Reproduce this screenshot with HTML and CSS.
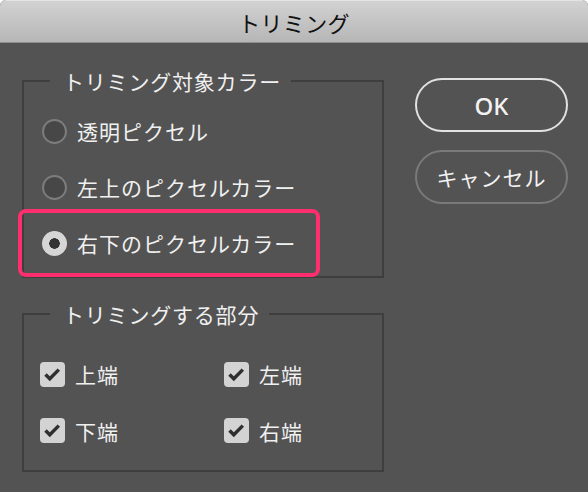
FILE: index.html
```html
<!DOCTYPE html>
<html lang="ja">
<head>
    <meta charset="UTF-8">
    <meta name="viewport" content="width=device-width, initial-scale=1.0">
    <title>トリミング</title>
    <link rel="stylesheet" href="styles.css">
</head>
<body>
    <div id="dialog">
        <div id="titlebar">トリミング</div>

        <div id="content">
            <div id="options">
                <fieldset class="group">
                    <legend>トリミング対象カラー</legend>
                    <div class="radio-row">
                        <span class="radio"></span>
                        <span class="label">透明ピクセル</span>
                    </div>
                    <div class="radio-row">
                        <span class="radio"></span>
                        <span class="label">左上のピクセルカラー</span>
                    </div>
                    <div class="radio-row highlight">
                        <span class="radio checked"></span>
                        <span class="label">右下のピクセルカラー</span>
                    </div>
                </fieldset>

                <fieldset class="group trim-group">
                    <legend>トリミングする部分</legend>
                    <div class="check-grid">
                        <div class="check-row">
                            <span class="checkbox"><svg viewBox="0 0 25 25"><path d="M5.5 12.5 L9.8 16.8 L18.8 7.6"/></svg></span>
                            <span class="label">上端</span>
                        </div>
                        <div class="check-row">
                            <span class="checkbox"><svg viewBox="0 0 25 25"><path d="M5.5 12.5 L9.8 16.8 L18.8 7.6"/></svg></span>
                            <span class="label">左端</span>
                        </div>
                        <div class="check-row">
                            <span class="checkbox"><svg viewBox="0 0 25 25"><path d="M5.5 12.5 L9.8 16.8 L18.8 7.6"/></svg></span>
                            <span class="label">下端</span>
                        </div>
                        <div class="check-row">
                            <span class="checkbox"><svg viewBox="0 0 25 25"><path d="M5.5 12.5 L9.8 16.8 L18.8 7.6"/></svg></span>
                            <span class="label">右端</span>
                        </div>
                    </div>
                </fieldset>
            </div>

            <div id="buttons">
                <div class="button primary">OK</div>
                <div class="button">キャンセル</div>
            </div>
        </div>
    </div>
</body>
</html>
```

FILE: styles.css
```css
html, body {
    margin: 0;
    padding: 0;
    background: #ffffff;
}

#dialog {
    width: 588px;
    height: 492px;
    background-color: #535353;
    border-radius: 6px 6px 0 0;
    overflow: hidden;
    font-family: "Noto Sans CJK JP", "Noto Sans", sans-serif;
    color: #f0f0f0;
}

#titlebar {
    height: 43px;
    line-height: 42px;
    text-align: center;
    font-size: 22px;
    letter-spacing: 0.3px;
    color: #111111;
    background: linear-gradient(#d2d2d2, #b6b6b6);
    border-top: 1px solid #e4e4e4;
    border-bottom: 1px solid #8e8e8e;
    box-sizing: border-box;
}

#content {
    display: flex;
    padding: 27px 0 0 22px;
    gap: 31px;
}

#options {
    width: 362px;
}

.group {
    margin: 0;
    padding: 11px 0 5px 0;
    border: 2px solid #3e3e3e;
    min-inline-size: 0;
}

.group legend {
    margin-left: 26px;
    padding: 0 10px 0 13px;
    font-size: 21px;
    line-height: 22px;
    letter-spacing: 0.8px;
}

.trim-group {
    margin-top: 25px;
    padding: 21px 0 11px 0;
}

.label {
    font-size: 21px;
    letter-spacing: 1px;
    line-height: 24px;
}

.radio-row {
    display: flex;
    align-items: center;
    gap: 10px;
    width: 290px;
    height: 56px;
    padding-left: 18px;
    box-sizing: border-box;
}

.radio-row.highlight {
    outline: 4px solid #ff2e6f;
    outline-offset: 2px;
    border-radius: 2px;
}

.radio {
    width: 25px;
    height: 25px;
    border-radius: 50%;
    border: 2px solid #7c7c7c;
    background-color: #474747;
    box-sizing: border-box;
    flex: none;
}

.radio.checked {
    border: none;
    background: radial-gradient(circle, #333333 0 5px, #d6d6d6 5.5px);
}

.check-grid {
    display: grid;
    grid-template-columns: 184px 1fr;
    grid-auto-rows: 56.5px;
    padding-left: 16px;
}

.check-row {
    display: flex;
    align-items: center;
    gap: 10px;
}

.checkbox {
    width: 25px;
    height: 25px;
    border-radius: 4px;
    background-color: #d3d3d3;
    flex: none;
}

.checkbox svg {
    display: block;
    width: 25px;
    height: 25px;
}

.checkbox path {
    fill: none;
    stroke: #2f2f2f;
    stroke-width: 3.4;
}

#buttons {
    display: flex;
    flex-direction: column;
    gap: 18px;
    margin-top: 8px;
}

.button {
    width: 153px;
    height: 54px;
    border: 2px solid #7a7a7a;
    border-radius: 27px;
    box-sizing: border-box;
    display: flex;
    align-items: center;
    justify-content: center;
    font-size: 21px;
    letter-spacing: 1px;
    color: #f2f2f2;
}

.button.primary {
    border-color: #e2e2e2;
    font-family: "Noto Sans", sans-serif;
    font-size: 24px;
    font-weight: 500;
    letter-spacing: 0;
}
```
